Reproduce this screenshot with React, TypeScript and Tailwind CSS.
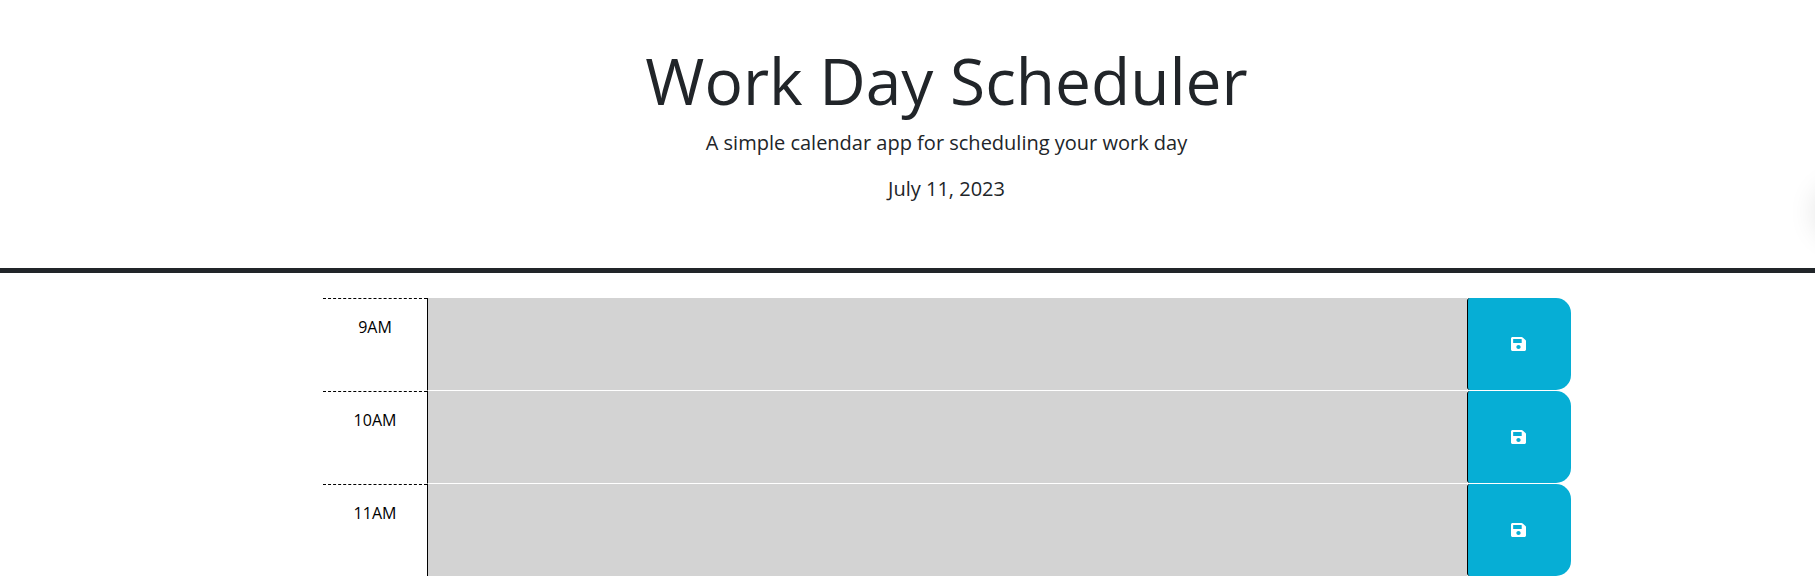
const hours = ["9AM", "10AM", "11AM"];

function SaveIcon() {
  return (
    <svg viewBox="0 0 448 512" preserveAspectRatio="none" className="mr-[2px] h-4 w-[15px]" fill="currentColor" aria-hidden="true">
      <path d="M433.941 129.941l-83.882-83.882A48 48 0 0 0 316.118 32H48C21.490 32 0 53.490 0 80v352c0 26.510 21.490 48 48 48h352c26.510 0 48-21.490 48-48V163.882a48 48 0 0 0-14.059-33.941zM224 416c-35.346 0-64-28.654-64-64 0-35.346 28.654-64 64-64s64 28.654 64 64c0 35.346-28.654 64-64 64zm96-304.520V212c0 6.627-5.373 12-12 12H76c-6.627 0-12-5.373-12-12V108c0-6.627 5.373-12 12-12h228.520c3.183 0 6.235 1.264 8.485 3.515l3.480 3.480A11.996 11.996 0 0 1 320 111.480z" />
    </svg>
  );
}

export default function App() {
  return (
    <div className="h-[576px] overflow-hidden bg-white font-['Open_Sans',sans-serif] text-base leading-6 text-[#212529]">
      <header className="relative h-[273px] overflow-hidden border-b-[5px] border-[#212529] px-6 pt-[43px] text-center">
        <h1 className="mb-2 ml-[78px] text-[64px] leading-[76.800px]">Work Day Scheduler</h1>
        <p className="mb-4 ml-[78px] text-xl leading-[30px]">A simple calendar app for scheduling your work day</p>
        <p className="ml-[78px] text-xl leading-[30px]">July 11, 2023</p>
        <div className="absolute top-[187px] -right-[52px] size-[50px] rounded-full shadow-[0_0_30px_rgba(0,0,0,0.14)]" />
      </header>
      <main className="ml-[323px] mt-[25px] w-[1248px]">
        {hours.map((hour) => (
          <div key={hour} className="flex h-[93px]">
            <div className="w-[104px] border-t border-dashed border-black pt-4 text-center text-black">{hour}</div>
            <textarea className="w-[1040px] resize-none border-b border-l border-b-white border-l-black bg-[#d3d3d3]" aria-label={hour} />
            <button className="flex h-[92px] flex-1 items-center justify-center rounded-l-[3px] rounded-r-[15px] border-l border-black bg-[#06aed5] text-white" aria-label="save">
              <SaveIcon />
            </button>
          </div>
        ))}
      </main>
    </div>
  );
}
